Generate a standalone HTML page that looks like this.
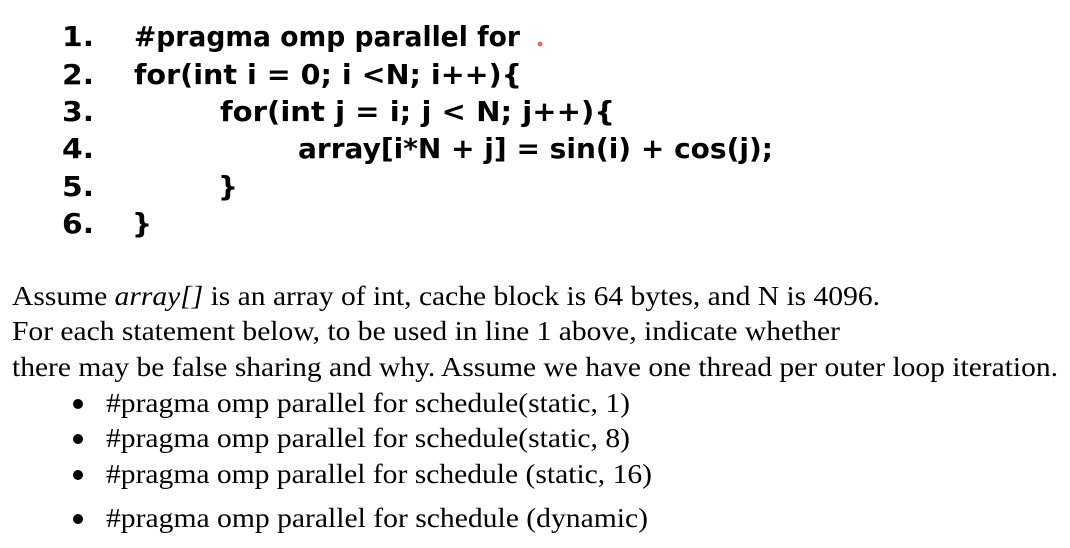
<!DOCTYPE html>
<html><head><meta charset="utf-8"><style>
html,body{margin:0;padding:0;background:#fff;width:1070px;height:548px;overflow:hidden}
.c{font-family:"DejaVu Sans",sans-serif;font-weight:bold;font-size:28px;fill:#000}
.t{font-family:"Liberation Serif",serif;font-size:27px;fill:#000}
</style></head><body>
<svg width="1070" height="548" viewBox="0 0 1070 548" xmlns="http://www.w3.org/2000/svg">
<g class="c">
<text x="62" y="46" textLength="32" lengthAdjust="spacingAndGlyphs">1.</text>
<text x="62" y="84" textLength="32" lengthAdjust="spacingAndGlyphs">2.</text>
<text x="62" y="121" textLength="32" lengthAdjust="spacingAndGlyphs">3.</text>
<text x="62" y="158" textLength="32" lengthAdjust="spacingAndGlyphs">4.</text>
<text x="62" y="196" textLength="32" lengthAdjust="spacingAndGlyphs">5.</text>
<text x="62" y="233" textLength="32" lengthAdjust="spacingAndGlyphs">6.</text>
<text x="134" y="46" textLength="386" lengthAdjust="spacingAndGlyphs">#pragma omp parallel for</text>
<text x="134" y="84" textLength="388" lengthAdjust="spacingAndGlyphs">for(int i = 0; i &lt;N; i++){</text>
<text x="220" y="121" textLength="395" lengthAdjust="spacingAndGlyphs">for(int j = i; j &lt; N; j++){</text>
<text x="298" y="158" textLength="475" lengthAdjust="spacingAndGlyphs">array[i*N + j] = sin(i) + cos(j);</text>
<text x="218" y="196">}</text>
<text x="132" y="233">}</text>
</g>
<circle cx="540" cy="44" r="2.5" fill="#e66"/>
<g class="t">
<text x="12" y="305" textLength="868" lengthAdjust="spacingAndGlyphs">Assume <tspan font-style="italic">array[]</tspan> is an array of int, cache block is 64 bytes, and N is 4096.</text>
<text x="12" y="340" textLength="828" lengthAdjust="spacingAndGlyphs">For each statement below, to be used in line 1 above, indicate whether</text>
<text x="12" y="376" textLength="1046" lengthAdjust="spacingAndGlyphs">there may be false sharing and why. Assume we have one thread per outer loop iteration.</text>
<text x="106" y="412" textLength="524" lengthAdjust="spacingAndGlyphs">#pragma omp parallel for schedule(static, 1)</text>
<text x="106" y="447" textLength="524" lengthAdjust="spacingAndGlyphs">#pragma omp parallel for schedule(static, 8)</text>
<text x="106" y="483" textLength="546" lengthAdjust="spacingAndGlyphs">#pragma omp parallel for schedule (static, 16)</text>
<text x="106" y="527" textLength="542" lengthAdjust="spacingAndGlyphs">#pragma omp parallel for schedule (dynamic)</text>
</g>
<g fill="#000">
<circle cx="78" cy="404" r="5"/>
<circle cx="78" cy="439" r="5"/>
<circle cx="78" cy="475" r="5"/>
<circle cx="78" cy="519" r="5"/>
</g>
</svg>
</body></html>
